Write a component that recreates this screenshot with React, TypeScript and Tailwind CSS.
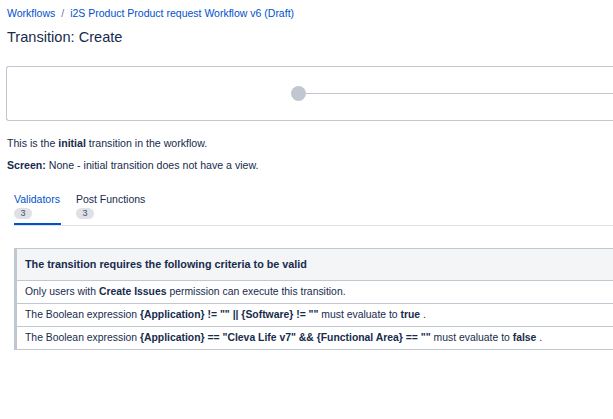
import React from 'react';

const font = { fontFamily: '"Liberation Sans", Arial, sans-serif' };

function Badge({ n }: { n: number }) {
  return (
    <span className="mt-[2px] inline-flex h-[11px] min-w-[18px] items-center justify-center rounded-full bg-[#dfe1e6] px-1 text-[9px] leading-none text-[#42526e]">
      {n}
    </span>
  );
}

function Row({ children }: { children: React.ReactNode }) {
  return (
    <div className="flex h-[23px] items-center border-b border-[#c1c7d0] px-2">
      <p className="whitespace-nowrap text-[10.4px] text-[#172b4d]">{children}</p>
    </div>
  );
}

export default function App() {
  return (
    <div className="h-[419px] w-[613px] overflow-hidden bg-white text-[#172b4d]" style={font}>
      <div className="pl-[7px] pt-[6px]">
        <nav className="flex items-center gap-[6px] text-[10.5px] leading-[14px] text-[#0052cc]">
          <a>Workflows</a>
          <span className="text-[#6b778c]">/</span>
          <a>i2S Product Product request Workflow v6 (Draft)</a>
        </nav>
        <h1 className="mt-[6px] text-[14.6px] leading-[22px] text-[#172b4d]">Transition: Create</h1>
      </div>

      <div className="ml-[6px] mt-[18px] flex h-[55px] items-center rounded-l-[3px] border border-r-0 border-[#c1c7d0] pl-[284px]">
        <span className="h-[15px] w-[15px] shrink-0 rounded-full bg-[#c1c7d0]" />
        <span className="h-px flex-1 bg-[#c1c7d0]" />
      </div>

      <div className="px-[7px] text-[10.6px]">
        <p className="mt-[15px] leading-[14px]">
          This is the <b>initial</b> transition in the workflow.
        </p>
        <p className="mt-[8px] leading-[14px]">
          <b>Screen:</b> None - initial transition does not have a view.
        </p>
      </div>

      <div className="ml-[14px] mt-[20px] flex border-b border-[#dfe1e6] text-[10.5px]">
        <div className="mr-[15px] flex flex-col items-start border-b-2 border-[#0052cc] pb-[4px] pr-[1px]">
          <span className="leading-[14px] text-[#0052cc]">Validators</span>
          <Badge n={3} />
        </div>
        <div className="flex flex-col items-start pb-[4px]">
          <span className="leading-[14px] text-[#172b4d]">Post Functions</span>
          <Badge n={3} />
        </div>
      </div>

      <div className="ml-[14px] mt-[22px] border-l-[3px] border-[#c1c7d0]">
        <div className="flex h-[33px] items-center border-y border-[#c1c7d0] bg-[#f4f5f7] px-2">
          <p className="text-[10.8px] font-bold text-[#172b4d]">The transition requires the following criteria to be valid</p>
        </div>
        <Row>
          Only users with <b>Create Issues</b> permission can execute this transition.
        </Row>
        <Row>
          The Boolean expression <b>{'{Application} != "" || {Software} != ""'}</b> must evaluate to <b>true</b> .
        </Row>
        <Row>
          The Boolean expression <b>{'{Application} == "Cleva Life v7" && {Functional Area} == ""'}</b> must evaluate to <b>false</b> .
        </Row>
      </div>
    </div>
  );
}
